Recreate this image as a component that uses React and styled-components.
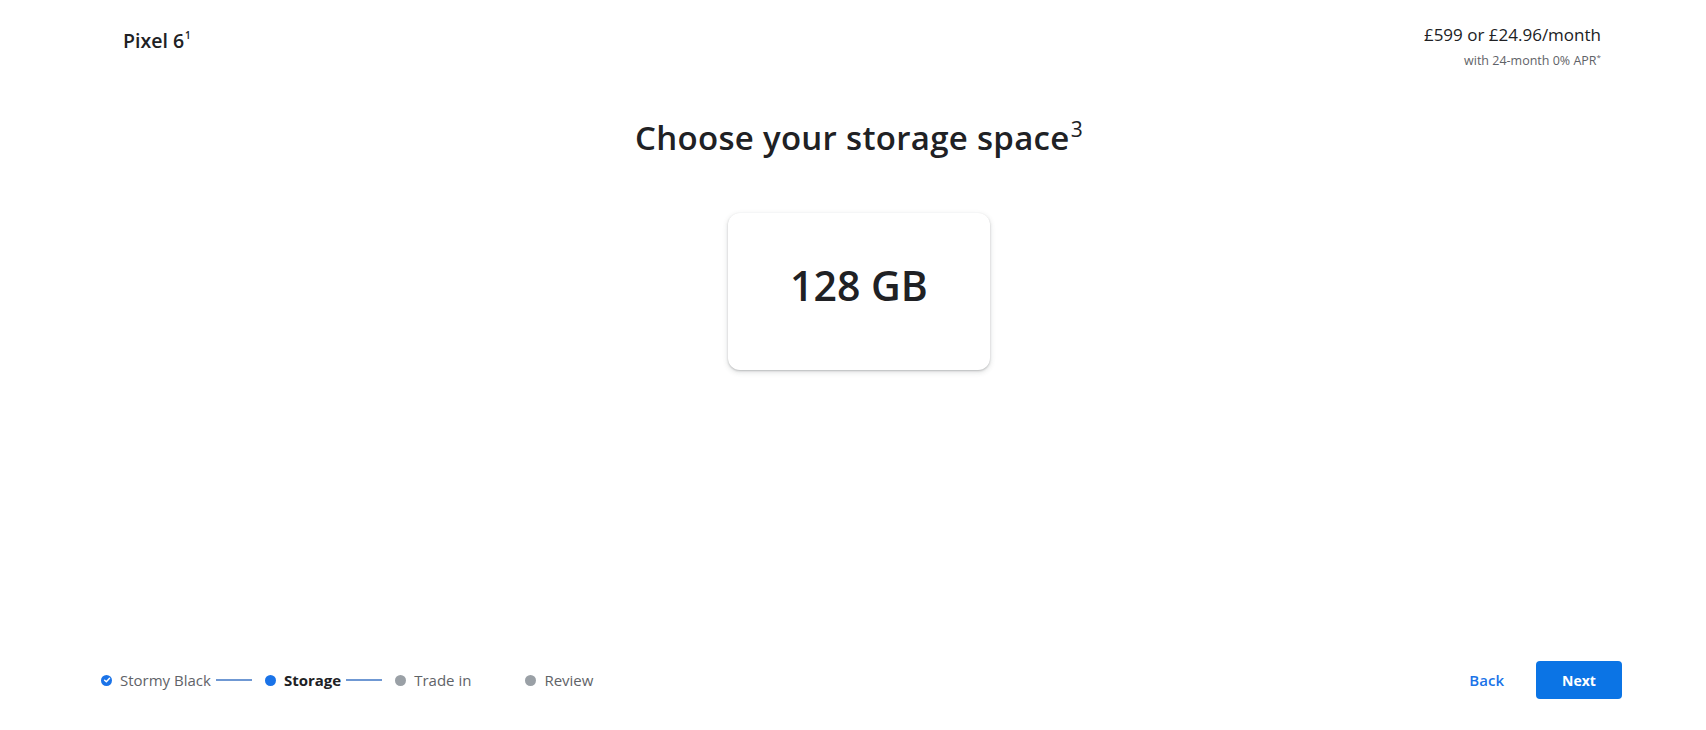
import React from 'react';
import styled, { createGlobalStyle } from 'styled-components';

const GlobalStyle = createGlobalStyle`
  html, body {
    margin: 0;
    padding: 0;
    background: #fff;
  }
  body {
    font-family: "Open Sans", "Liberation Sans", Arial, sans-serif;
    color: #202124;
  }
`;

const Page = styled.div`
  height: 730px;
  display: flex;
  flex-direction: column;
  background: #fff;
`;

const Header = styled.header`
  display: flex;
  justify-content: space-between;
  align-items: flex-start;
  padding: 23px 105px 0 123px;
`;

const Product = styled.div`
  font-size: 19.5px;
  font-weight: 600;
  line-height: 24px;
  margin-top: 6px;
  sup {
    font-size: 10px;
    vertical-align: 9px;
    line-height: 0;
    margin-left: 1px;
  }
`;

const Price = styled.div`
  text-align: right;
`;

const PriceMain = styled.div`
  font-size: 17px;
  line-height: 24px;
  color: #202124;
`;

const PriceSub = styled.div`
  margin-top: 6px;
  font-size: 12.5px;
  line-height: 16px;
  color: #5f6368;
  sup {
    font-size: 8px;
    vertical-align: 5px;
    line-height: 0;
  }
`;

const Main = styled.main`
  flex: 1;
  display: flex;
  flex-direction: column;
  align-items: center;
  padding: 47px 0 0 12px;
`;

const Title = styled.h1`
  margin: 0;
  font-size: 33px;
  font-weight: 600;
  line-height: 44px;
  letter-spacing: 0.3px;
  color: #202124;
  sup {
    font-size: 21px;
    font-weight: 500;
    vertical-align: 13px;
    line-height: 0;
    margin-left: 1px;
  }
`;

const Options = styled.div`
  display: flex;
  gap: 24px;
  margin-top: 53px;
`;

const OptionCard = styled.button`
  width: 262px;
  height: 157px;
  padding: 0 0 14px;
  border: none;
  border-radius: 12px;
  background: #fff;
  box-shadow: 0 1px 2px rgba(60, 64, 67, 0.28), 0 2px 5px 1px rgba(60, 64, 67, 0.12);
  font-family: inherit;
  font-size: 41px;
  font-weight: 600;
  color: #202124;
  cursor: pointer;
  display: flex;
  align-items: center;
  justify-content: center;
`;

const Footer = styled.footer`
  height: 100px;
  display: flex;
  align-items: center;
  justify-content: space-between;
  padding: 0 84px 0 101px;
`;

const Stepper = styled.ol`
  display: flex;
  align-items: center;
  list-style: none;
  margin: 0;
  padding: 0;
`;

const Step = styled.li`
  display: flex;
  align-items: center;
  gap: 8px;
  font-size: 15px;
  line-height: 20px;
  font-weight: ${p => (p.$current ? 700 : 400)};
  color: ${p => (p.$current ? '#202124' : '#5f6368')};
`;

const Dot = styled.span`
  width: 11px;
  height: 11px;
  border-radius: 50%;
  flex: none;
  display: flex;
  align-items: center;
  justify-content: center;
  background: ${p => (p.$state === 'todo' ? '#9aa0a6' : '#1a73e8')};
`;

const Connector = styled.span`
  width: 36px;
  height: 2px;
  margin: 0 13px 0 5px;
  background: ${p => (p.$hidden ? 'transparent' : '#6f98d3')};
`;

const Actions = styled.div`
  display: flex;
  align-items: center;
  gap: 32px;
`;

const BackButton = styled.button`
  border: none;
  background: none;
  padding: 0;
  font-family: inherit;
  font-size: 15px;
  font-weight: 600;
  color: #1a73e8;
  cursor: pointer;
`;

const NextButton = styled.button`
  width: 86px;
  height: 38px;
  border: none;
  border-radius: 4px;
  background: #0b74e5;
  color: #fff;
  font-family: inherit;
  font-size: 14px;
  font-weight: 700;
  cursor: pointer;
`;

const steps = [
  { label: 'Stormy Black', state: 'done' },
  { label: 'Storage', state: 'current' },
  { label: 'Trade in', state: 'todo' },
  { label: 'Review', state: 'todo' },
];

const Check = () => (
  <svg width="8" height="8" viewBox="0 0 10 10" fill="none">
    <path d="M2 5.2 L4.2 7.3 L8.2 2.9" stroke="#fff" strokeWidth="1.8" strokeLinecap="round" strokeLinejoin="round" />
  </svg>
);

const App = () => {
  return (
    <Page>
      <GlobalStyle />
      <Header>
        <Product>Pixel 6<sup>1</sup></Product>
        <Price>
          <PriceMain>£599 or £24.96/month</PriceMain>
          <PriceSub>with 24-month 0% APR<sup>*</sup></PriceSub>
        </Price>
      </Header>
      <Main>
        <Title>Choose your storage space<sup>3</sup></Title>
        <Options>
          <OptionCard>128 GB</OptionCard>
        </Options>
      </Main>
      <Footer>
        <Stepper>
          {steps.map((s, i) => (
            <React.Fragment key={s.label}>
              <Step $state={s.state} $current={s.state === 'current'}>
                <Dot $state={s.state}>{s.state === 'done' && <Check />}</Dot>
                {s.label}
              </Step>
              {i < steps.length - 1 && <Connector $hidden={s.state === 'todo'} />}
            </React.Fragment>
          ))}
        </Stepper>
        <Actions>
          <BackButton>Back</BackButton>
          <NextButton>Next</NextButton>
        </Actions>
      </Footer>
    </Page>
  );
};

export default App;
